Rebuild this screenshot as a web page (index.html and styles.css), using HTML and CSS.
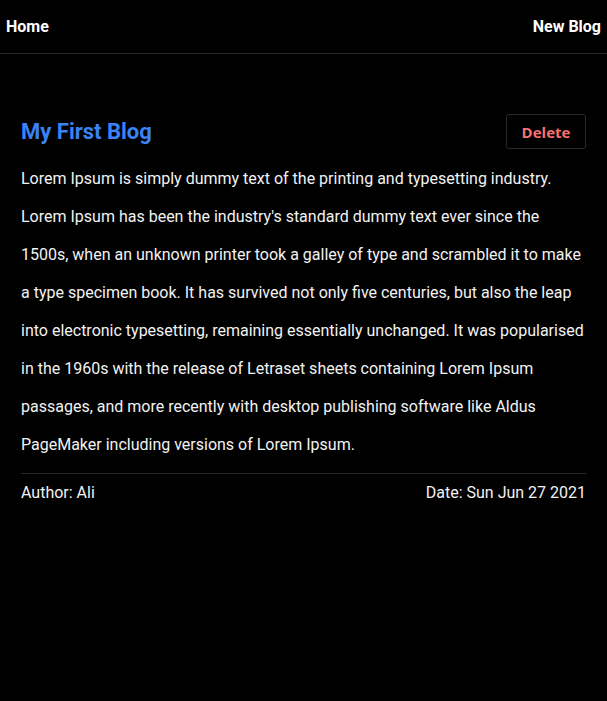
FILE: index.html
```html
<!DOCTYPE html>
<html>
<head>
<meta charset="utf-8">
<link rel="stylesheet" href="styles.css">
</head>
<body>
<nav class="nav">
  <a class="nav-link" href="#">Home</a>
  <a class="nav-link" href="#">New Blog</a>
</nav>
<main class="content">
  <article class="blog">
    <div class="blog-head">
      <h2 class="blog-title">My First Blog</h2>
      <button class="delete-btn">Delete</button>
    </div>
    <p class="blog-body">Lorem Ipsum is simply dummy text of the printing and typesetting industry. Lorem Ipsum has been the industry's standard dummy text ever since the 1500s, when an unknown printer took a galley of type and scrambled it to make a type specimen book. It has survived not only five centuries, but also the leap into electronic typesetting, remaining essentially unchanged. It was popularised in the 1960s with the release of Letraset sheets containing Lorem Ipsum passages, and more recently with desktop publishing software like Aldus PageMaker including versions of Lorem Ipsum.</p>
    <div class="blog-foot">
      <span>Author: Ali</span>
      <span>Date: Sun Jun 27 2021</span>
    </div>
  </article>
</main>
</body>
</html>
```
FILE: styles.css
```css
html, body {
  margin: 0;
  padding: 0;
  background: #000;
  color: #fff;
  font-family: Roboto, "Liberation Sans", sans-serif;
}
.nav {
  display: flex;
  justify-content: space-between;
  align-items: center;
  height: 53px;
  padding: 0 6px;
  border-bottom: 1px solid #2a2a2a;
}
.nav-link {
  color: #fff;
  text-decoration: none;
  font-weight: 700;
  font-size: 16px;
}
.content {
  padding: 60px 21px 0;
}
.blog-head {
  display: flex;
  justify-content: space-between;
  align-items: center;
  height: 35px;
}
.blog-title {
  margin: 0;
  font-size: 22px;
  font-weight: 700;
  color: #3b82f6;
}
.delete-btn {
  width: 80px;
  height: 35px;
  background: #000;
  border: 1px solid #2a2a2a;
  border-radius: 3px;
  color: #f87171;
  font-family: "Open Sans", sans-serif;
  font-weight: 700;
  font-size: 15px;
  padding: 0;
}
.blog-body {
  margin: 11px 0 0;
  font-size: 16px;
  line-height: 38px;
  color: #f2f2f2;
  padding-bottom: 9px;
  border-bottom: 1px solid #2a2a2a;
}
.blog-foot {
  display: flex;
  justify-content: space-between;
  padding-top: 7px;
  font-size: 16px;
  line-height: 24px;
  color: #f2f2f2;
}
```
